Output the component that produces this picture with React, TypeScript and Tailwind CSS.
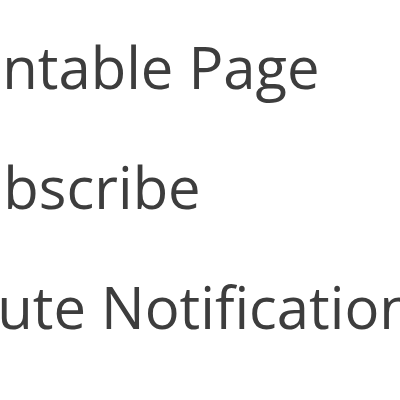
import React from "react";

const ITEMS = [
  { label: "Printable Page", shift: "-ml-[71px]" },
  { label: "Subscribe", shift: "-ml-[64px]" },
  { label: "Mute Notifications", shift: "-ml-[55px]" },
];

export default function App() {
  return (
    <div className="w-[400px] h-[400px] overflow-hidden bg-white">
      <ul className="pt-[22px] flex flex-col" style={{ fontFamily: '"Open Sans", "Noto Sans", sans-serif' }}>
        {ITEMS.map(item => (
          <li key={item.label} className={`${item.shift} h-[120px] leading-[90px] text-[58px] text-[#3d3d3d] whitespace-nowrap`}>
            {item.label}
          </li>
        ))}
      </ul>
    </div>
  );
}
